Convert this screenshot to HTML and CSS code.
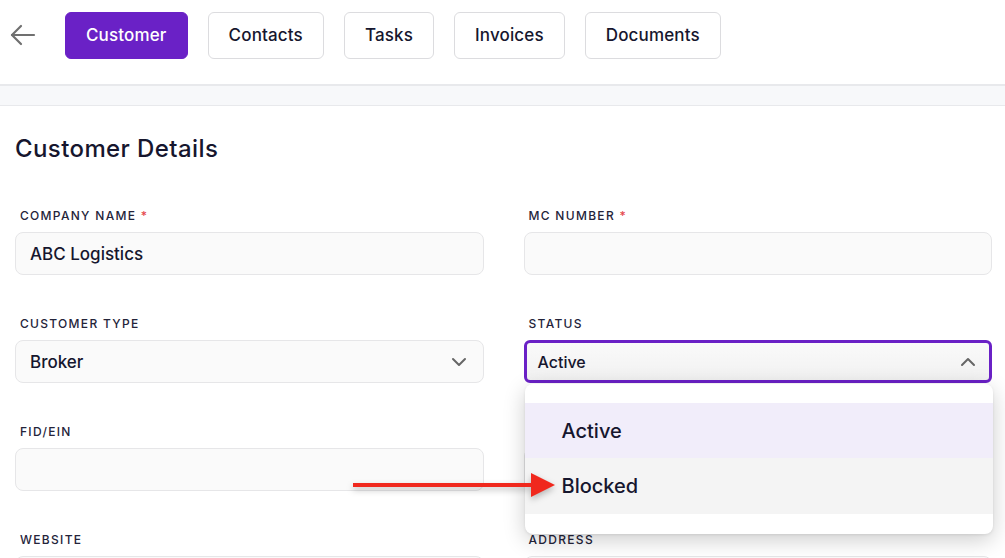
FILE: index.html
```html
<!DOCTYPE html>
<html lang="en">
<head>
    <meta charset="UTF-8">
    <meta name="viewport" content="width=device-width, initial-scale=1.0">
    <title>Customer Details</title>
    <link rel="stylesheet" href="styles.css">
</head>
<body>
    <div class="topbar">
        <button class="back-btn" aria-label="Back">
            <svg width="26" height="24" viewBox="0 0 26 24" fill="none" stroke="#707070" stroke-width="2.2" stroke-linecap="round" stroke-linejoin="round">
                <path d="M24 12H2"/>
                <path d="M11 3L2 12L11 21"/>
            </svg>
        </button>
        <div class="tabs">
            <button class="tab active">Customer</button>
            <button class="tab">Contacts</button>
            <button class="tab">Tasks</button>
            <button class="tab">Invoices</button>
            <button class="tab">Documents</button>
        </div>
    </div>
    <div class="band"></div>

    <div class="content">
        <h2 class="title">Customer Details</h2>
        <div class="form-grid">
            <div class="field">
                <label>COMPANY NAME <span class="req">*</span></label>
                <div class="input">ABC Logistics</div>
            </div>
            <div class="field">
                <label>MC NUMBER <span class="req">*</span></label>
                <div class="input"></div>
            </div>
            <div class="field">
                <label>CUSTOMER TYPE</label>
                <div class="input select">
                    <span>Broker</span>
                    <svg width="16" height="10" viewBox="0 0 16 10" fill="none" stroke="#666" stroke-width="2" stroke-linecap="round" stroke-linejoin="round"><path d="M2 2l6 6 6-6"/></svg>
                </div>
            </div>
            <div class="field">
                <label>STATUS</label>
                <div class="select-wrap">
                    <div class="input select focused">
                        <span>Active</span>
                        <svg width="16" height="10" viewBox="0 0 16 10" fill="none" stroke="#666" stroke-width="2" stroke-linecap="round" stroke-linejoin="round"><path d="M2 8l6-6 6 6"/></svg>
                    </div>
                    <ul class="menu">
                        <li class="selected">Active</li>
                        <li class="hover">Blocked</li>
                    </ul>
                </div>
            </div>
            <div class="field">
                <label>FID/EIN</label>
                <div class="input"></div>
            </div>
            <div class="field">
                <label>&nbsp;</label>
                <div class="input"></div>
            </div>
            <div class="field">
                <label>WEBSITE</label>
                <div class="input"></div>
            </div>
            <div class="field">
                <label>ADDRESS</label>
                <div class="input"></div>
            </div>
        </div>
    </div>

    <div class="pointer">
        <div class="pointer-line"></div>
        <div class="pointer-head"></div>
    </div>
</body>
</html>
```

FILE: styles.css
```css
body {
    margin: 0;
    font-family: 'Inter', 'Noto Sans', sans-serif;
    background-color: #fff;
    color: #16162e;
    overflow: hidden;
    height: 558px;
}

.topbar {
    display: flex;
    align-items: center;
    padding-left: 10px;
    border-bottom: 2px solid #e8e9ec;
    box-sizing: border-box;
    height: 86px;
    padding-bottom: 14px;
}

.back-btn {
    background: none;
    border: none;
    padding: 0;
    width: 26px;
    height: 24px;
    margin-right: 29px;
    cursor: pointer;
}

.tabs {
    display: flex;
    gap: 20px;
}

.tab {
    font-family: inherit;
    font-size: 17px;
    font-weight: 500;
    letter-spacing: 0.15px;
    color: #16162e;
    background: #fff;
    border: 1px solid #dcdcdf;
    border-radius: 6px;
    height: 47px;
    padding: 0 20px;
    cursor: pointer;
}

.tab.active {
    background-color: #6a21c6;
    border-color: #6a21c6;
    color: #fff;
}

.band {
    height: 19px;
    background-color: #f7f8fa;
    border-bottom: 1px solid #e8e9ec;
}

.content {
    padding: 0 13px 0 15px;
}

.title {
    margin: 28px 0 44px;
    font-size: 24px;
    font-weight: 500;
    letter-spacing: 0.4px;
    line-height: 30px;
    color: #16162e;
}

.form-grid {
    display: grid;
    grid-template-columns: 1fr 1fr;
    column-gap: 40px;
    row-gap: 41px;
}

.field label {
    display: block;
    font-size: 12px;
    line-height: 16px;
    letter-spacing: 1.3px;
    font-weight: 500;
    color: #24243a;
    margin: 0 0 8px 5px;
}

.req {
    color: #e5484d;
}

.input {
    height: 43px;
    box-sizing: border-box;
    background-color: #fafafa;
    border: 1px solid #e6e6e8;
    border-radius: 8px;
    padding: 0 14px;
    display: flex;
    align-items: center;
    font-size: 17px;
    font-weight: 500;
    color: #16162e;
}

.select {
    justify-content: space-between;
}

.select svg {
    margin-right: 2px;
}

.select-wrap {
    position: relative;
}

.select.focused {
    border: 3px solid #6a21c6;
    border-radius: 6px;
    padding: 0 11px;
    background: linear-gradient(#fafafa, #f1f1f1);
    font-size: 16px;
}

.menu {
    position: absolute;
    top: 44px;
    left: 1px;
    right: -1px;
    margin: 0;
    padding: 19px 0 20px;
    list-style: none;
    background: #fff;
    border-radius: 8px;
    box-shadow: 0 6px 22px rgba(0, 0, 0, 0.2), 0 1px 3px rgba(0, 0, 0, 0.08);
    z-index: 5;
}

.menu li {
    height: 55px;
    display: flex;
    align-items: center;
    padding-left: 37px;
    font-size: 20px;
    font-weight: 500;
    color: #16162e;
}

.menu li.selected {
    background-color: #f1edfa;
}

.menu li.hover {
    background-color: #f4f4f4;
    height: 56px;
}

/* red annotation arrow */
.pointer {
    position: absolute;
    left: 353px;
    top: 473px;
    display: flex;
    align-items: center;
    z-index: 10;
    filter: drop-shadow(0 3px 3px rgba(0, 0, 0, 0.25));
}

.pointer-line {
    width: 180px;
    height: 4px;
    background-color: #f0281d;
}

.pointer-head {
    width: 0;
    height: 0;
    border-top: 12.5px solid transparent;
    border-bottom: 12.5px solid transparent;
    border-left: 24px solid #f0281d;
    margin-left: -2px;
}
```
